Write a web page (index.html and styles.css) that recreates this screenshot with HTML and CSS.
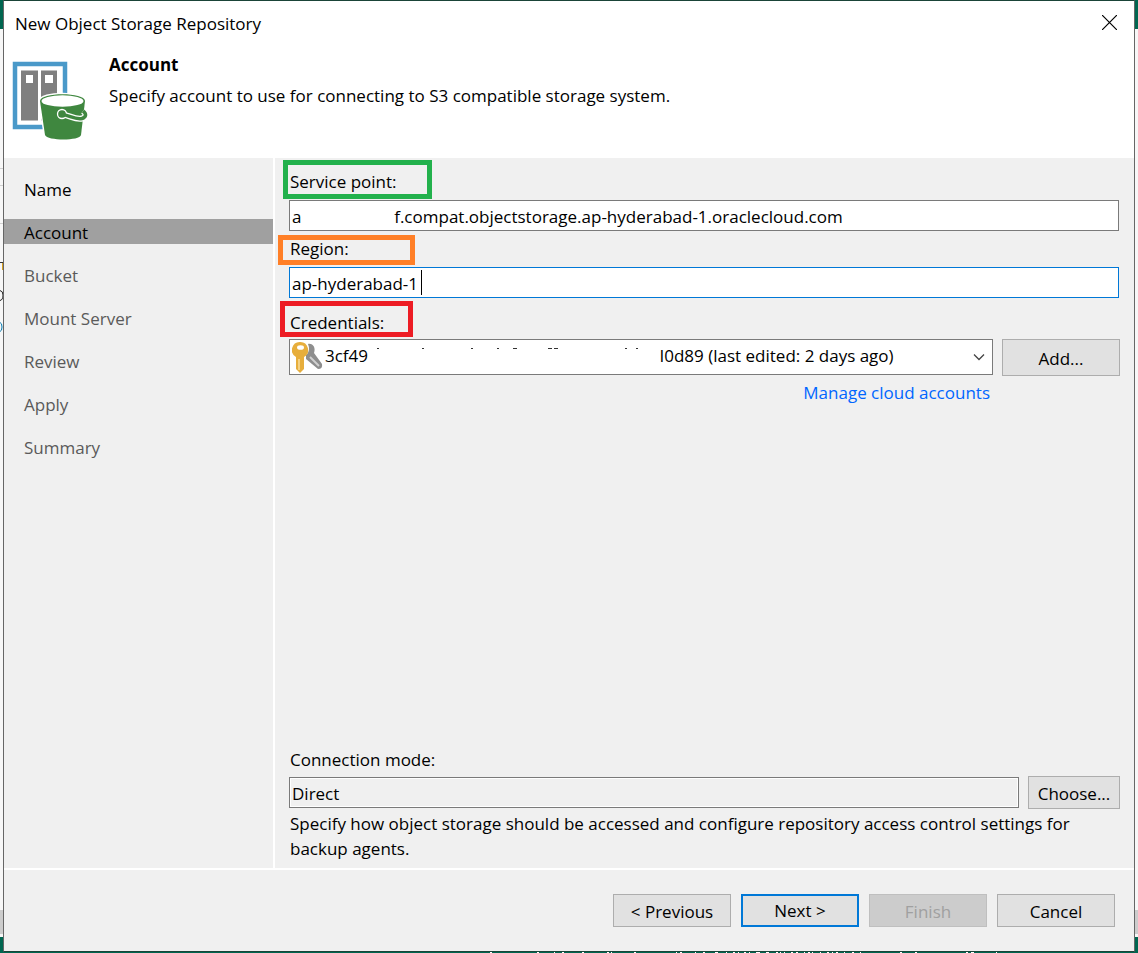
FILE: index.html
```html
<!DOCTYPE html>
<html lang="en">
<head>
<meta charset="utf-8">
<title>New Object Storage Repository</title>
<link rel="stylesheet" href="styles.css">
</head>
<body>
<svg class="edge" width="3" height="180" viewBox="0 0 3 180" aria-hidden="true">
  <path d="M0 8.500H3M0 25.500H3M0 63.500H3" stroke="#d0d0d0"/>
  <path d="M0 102.500H3" stroke="#333"/>
  <path d="M2.500 103V110" stroke="#d8a020"/>
  <path d="M0 130.500Q3 131 3 135Q3 140 0 140.500" fill="none" stroke="#222"/>
  <path d="M0 162.500Q2 163 2 167Q2 171 0 171.500" fill="none" stroke="#0078b0"/>
</svg>
<main class="dialog">
  <header class="header">
    <div class="titlebar">
      <h1 class="title">New Object Storage Repository</h1>
      <button class="close" type="button" aria-label="Close">
        <svg width="15" height="15" viewBox="0 0 15 15"><path d="M0 0L15 15M15 0L0 15" stroke="#000" stroke-width="1.2"/></svg>
      </button>
    </div>
    <div class="intro">
      <svg class="logo" width="77" height="80" viewBox="0 0 77 80" aria-hidden="true">
        <rect x="3" y="3" width="50" height="63" fill="#fff" stroke="#4a99c9" stroke-width="4.500"/>
        <path d="M9 9.500h17v50H9zM29 9.500h16v50H29z" fill="#7f7f7f"/>
        <path d="M14 14h7v8h-7zM33 14h8v8h-8z" fill="#fff"/>
        <path d="M28 40C28 31 73 31 73 40L69 74C68 80 35 80 33 74Z" fill="#3f873f" stroke="#fff" stroke-width="3"/>
        <path d="M28 40C28 31 73 31 73 40L69 74C68 80 35 80 33 74Z" fill="#3f873f"/>
        <ellipse cx="50.500" cy="40" rx="21" ry="5.800" fill="#fff"/>
        <path d="M50 53.500C57 54 63 59 70 57.500C74 56 75 53 71 50" fill="none" stroke="#fff" stroke-width="6"/>
        <circle cx="50" cy="53" r="4.500" fill="#3f873f" stroke="#fff" stroke-width="1.300"/>
        <path d="M50 53.500C57 54 63 59 70 57.500C74 56 75 53 71 50" fill="none" stroke="#3f873f" stroke-width="3.500"/>
      </svg>
      <div>
        <h2 class="heading">Account</h2>
        <p class="lead">Specify account to use for connecting to S3 compatible storage system.</p>
      </div>
    </div>
  </header>
  <div class="body">
    <nav class="steps" aria-label="Steps">
      <span class="step done">Name</span>
      <span class="step current" aria-current="step">Account</span>
      <span class="step">Bucket</span>
      <span class="step">Mount Server</span>
      <span class="step">Review</span>
      <span class="step">Apply</span>
      <span class="step">Summary</span>
    </nav>
    <form class="form" id="account">
      <div class="label-row service"><label for="service">Service point:</label><span class="mark green"></span></div>
      <input class="field" id="service" type="text" value="a                     f.compat.objectstorage.ap-hyderabad-1.oraclecloud.com">
      <div class="label-row region"><label for="region">Region:</label><span class="mark orange"></span></div>
      <div class="field-wrap">
        <input class="field focused" id="region" type="text" value="ap-hyderabad-1">
        <span class="caret"></span>
      </div>
      <div class="label-row credentials"><label for="credentials">Credentials:</label><span class="mark red"></span></div>
      <div class="picker">
        <div class="combo">
          <select class="select" id="credentials">
            <option>3cf49&nbsp;&nbsp;&nbsp;&nbsp;&nbsp;&nbsp;&nbsp;&nbsp;&nbsp;&nbsp;&nbsp;&nbsp;&nbsp;&nbsp;&nbsp;&nbsp;&nbsp;&nbsp;&nbsp;&nbsp;&nbsp;&nbsp;&nbsp;&nbsp;&nbsp;&nbsp;&nbsp;&nbsp;&nbsp;&nbsp;&nbsp;&nbsp;&nbsp;&nbsp;&nbsp;&nbsp;&nbsp;&nbsp;&nbsp;&nbsp;&nbsp;&nbsp;&nbsp;&nbsp;&nbsp;&nbsp;&nbsp;&nbsp;&nbsp;&nbsp;&nbsp;&nbsp;&nbsp;&nbsp;&nbsp;&nbsp;&nbsp;&nbsp;&nbsp;&nbsp;&nbsp;&nbsp;&nbsp;&nbsp;&nbsp;&nbsp;I0d89 (last edited: 2 days ago)</option>
          </select>
          <svg class="keys" width="31" height="31" viewBox="0 0 31 31" aria-hidden="true">
            <path d="M16 2C21 1 24 6 22 11L30 22Q31 27 26 27L14 17V13Q19 9 16 2Z" fill="#8e8e8e"/>
            <path d="M18 15L27 24" stroke="#d0d0d0" stroke-width="2"/>
            <path d="M8 0A8 8 0 0 1 12 15V27L8 31L4 27V15A8 8 0 0 1 8 0Z" fill="#e7ae3c"/>
            <ellipse cx="8.500" cy="5.500" rx="3.500" ry="2.300" fill="#fff"/>
            <path d="M7 17V28" stroke="#f8dc9b" stroke-width="1.500"/>
          </svg>
          <svg class="remnants" width="270" height="2" viewBox="0 0 270 2" aria-hidden="true">
            <path d="M1 .5h2M46 .5h2M95 .5h2M121 .5h2M137 .5h4M172 .5h4M178 .5h4M249 .5h2M260 .5h2" stroke="#333" stroke-width="1"/>
          </svg>
          <svg class="chevron" width="12" height="7" viewBox="0 0 12 7" aria-hidden="true"><path d="M1 .5L6 5.500L11 .5" fill="none" stroke="#444" stroke-width="1.300"/></svg>
        </div>
        <button class="button add" type="button">Add...</button>
      </div>
      <a class="link" href="#account">Manage cloud accounts</a>
      <div class="connection">
        <label for="mode">Connection mode:</label>
        <div class="mode-row">
          <input class="field readonly" id="mode" type="text" value="Direct" readonly>
          <button class="button choose" type="button">Choose...</button>
        </div>
        <p class="help">Specify how object storage should be accessed and configure repository access control settings for backup agents.</p>
      </div>
    </form>
  </div>
  <footer class="footer">
    <button class="button" type="button">&lt; Previous</button>
    <button class="button primary" type="button">Next &gt;</button>
    <button class="button" type="button" disabled>Finish</button>
    <button class="button" type="button">Cancel</button>
  </footer>
</main>
<svg class="status" width="656" height="1" viewBox="0 0 656 1" aria-hidden="true">
  <path d="M10 .5h2M57 .5h2M74 .5h1M82 .5h2M102 .5h2M127 .5h2M131 .5h1M154 .5h2M196 .5h1M200 .5h2M215 .5h1M223 .5h2M235 .5h3M246 .5h1M253 .5h2M258 .5h1M264 .5h2M269 .5h1M276 .5h4M286 .5h3M296 .5h2M300 .5h1M304 .5h1M311 .5h2M316 .5h2M324 .5h1M328 .5h2M332 .5h1M340 .5h1M347 .5h2M352 .5h1M356 .5h2M364 .5h1M372 .5h2M380 .5h1M420 .5h2M435 .5h2M486 .5h2M491 .5h3M516 .5h1" stroke="#fff"/>
</svg>
</body>
</html>
```
FILE: styles.css
```css
* { box-sizing: border-box; }
body {
  position: relative;
  margin: 0;
  min-height: 100vh;
  display: flex;
  padding: 0 3px 1px;
  background: linear-gradient(#006650 29px, #f7f7f7 29px, #f7f7f7 calc(100% - 43px), #ccc calc(100% - 43px), #ccc calc(100% - 19px), #f7f7f7 calc(100% - 19px), #f7f7f7 calc(100% - 16px), #006650 calc(100% - 16px));
  color: #000;
  font: 17px/24px "Open Sans", "Noto Sans", sans-serif;
}
h1, h2, p { margin: 0; }
button, input, select { font: inherit; color: inherit; }
.edge { position: absolute; left: 0; top: 160px; }
.status { position: absolute; left: 480px; bottom: 0; }
.dialog {
  flex: 1;
  min-width: 0;
  display: flex;
  flex-direction: column;
  border: 1px solid #666;
  border-top-color: #1a4438;
  border-bottom-color: #1a4438;
  background: #f0f0f0;
}
.header { height: 157px; background: #fff; }
.titlebar { display: flex; justify-content: space-between; padding: 11px 17px 0 11px; }
.title { font-size: 17px; font-weight: 400; }
.close { display: flex; padding: 3px 0 6px; border: 0; background: none; }
.intro { display: flex; gap: 20px; padding: 17px 8px 0; }
.logo { margin-top: 8px; }
.heading { font-size: 17px; font-weight: 700; }
.lead { margin-top: 7px; }
.body { flex: 1; display: flex; border-bottom: 2px solid #fff; }
.steps {
  width: 271px;
  display: flex;
  flex-direction: column;
  gap: 18px;
  padding-top: 18px;
  border-right: 2px solid #fff;
  color: #5a5a5a;
}
.step { height: 25px; line-height: 28px; padding-left: 20px; }
.done, .current { color: #000; }
.current { background: #a0a0a0; }
.form { flex: 1; min-width: 0; display: flex; flex-direction: column; padding: 12px 15px 7px 14px; }
.label-row { position: relative; padding-left: 1px; }
.service { margin-bottom: 6px; }
.region { margin: 6px 0; }
.credentials { margin: 13px 0 4px; }
.mark { position: absolute; border: 5px solid; pointer-events: none; }
.green { left: -6px; top: -10px; width: 149px; height: 39px; border-color: #22b14c; }
.orange { left: -11px; top: -2px; width: 137px; height: 30px; border-color: #ff7f27; }
.red { left: -9px; top: -10px; width: 133px; height: 36px; border-color: #ed1c24; }
.field { display: block; width: 100%; height: 31px; padding: 2px 2px 0; border: 1px solid #7a7a7a; border-radius: 0; background: #fff; outline: 0; }
.field-wrap { position: relative; }
.focused { border-color: #0078d7; }
.caret { position: absolute; left: 132px; top: 3px; width: 1px; height: 25px; background: #000; }
.picker { display: flex; gap: 9px; margin-right: -1px; }
.combo { position: relative; flex: 1; }
.select { width: 100%; height: 36px; padding: 0 28px 2px 35px; border: 1px solid #7a7a7a; border-radius: 0; background: #fff; appearance: none; }
.keys { position: absolute; left: 3px; top: 3px; }
.remnants { position: absolute; left: 87px; top: 9px; }
.chevron { position: absolute; right: 8px; top: 15px; }
.button { width: 118px; height: 33px; padding: 2px 0 0; border: 1px solid #adadad; border-radius: 0; background: #e1e1e1; }
.add { height: 37px; }
.link { align-self: flex-end; margin-top: 5px; margin-right: 129px; color: #0066ff; text-decoration: none; }
.connection { margin-top: auto; }
.connection label { padding-left: 1px; }
.mode-row { display: flex; align-items: center; gap: 9px; margin: 4px -1px 2px 0; }
.mode-row .field { flex: 1; width: auto; }
.readonly { background: #f0f0f0; box-shadow: inset 0 0 0 1px #fff; }
.choose { width: 92px; }
.help { padding-left: 1px; line-height: 25px; }
.footer { display: flex; justify-content: flex-end; gap: 10px; padding: 24px 19px; }
.primary { border: 2px solid #0078d7; padding-top: 1px; }
.button:disabled { background: #ccc; border-color: #bfbfbf; color: #a0a0a0; }
```
